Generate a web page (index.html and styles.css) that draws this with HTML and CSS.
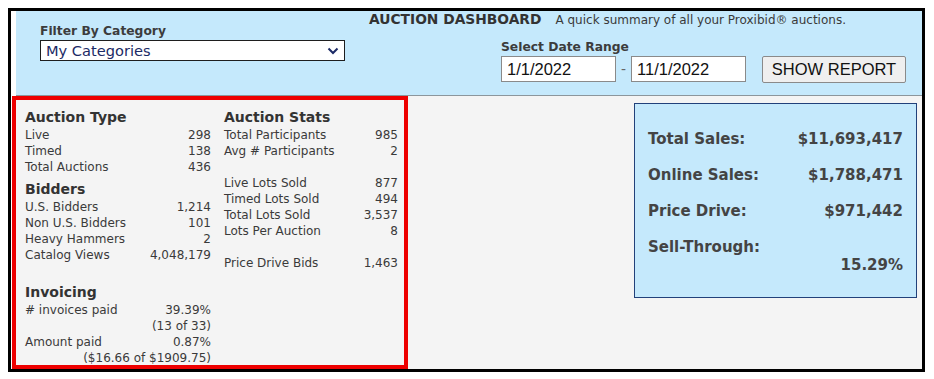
FILE: index.html
```html
<!DOCTYPE html>
<html lang="en">
<head>
<meta charset="utf-8">
<title>Auction Dashboard</title>
<link rel="stylesheet" href="styles.css">
</head>
<body>
<div class="frame">
  <header class="hdr">
    <div class="filter">
      <div class="lbl">Filter By Category</div>
      <div class="select">
        <span>My Categories</span>
        <svg class="chev" width="12" height="8" viewBox="0 0 12 8"><path d="M1.5 1.5 L6 6 L10.5 1.5" fill="none" stroke="#1b2a66" stroke-width="2"/></svg>
      </div>
    </div>
    <div class="hdr-right">
      <div class="title"><b>AUCTION DASHBOARD</b><span class="sub">A quick summary of all your Proxibid® auctions.</span></div>
      <div class="dates">
        <div class="lbl">Select Date Range</div>
        <div class="date-row">
          <div class="input">1/1/2022</div>
          <span class="dash">-</span>
          <div class="input">11/1/2022</div>
          <button class="btn">SHOW REPORT</button>
        </div>
      </div>
    </div>
  </header>
  <main class="content">
    <div class="stats">
      <div class="col col1">
        <div class="h">Auction Type</div>
        <div class="row"><span>Live</span><span>298</span></div>
        <div class="row"><span>Timed</span><span>138</span></div>
        <div class="row"><span>Total Auctions</span><span>436</span></div>
        <div class="h h-gap">Bidders</div>
        <div class="row"><span>U.S. Bidders</span><span>1,214</span></div>
        <div class="row"><span>Non U.S. Bidders</span><span>101</span></div>
        <div class="row"><span>Heavy Hammers</span><span>2</span></div>
        <div class="row"><span>Catalog Views</span><span>4,048,179</span></div>
        <div class="h h-gap2">Invoicing</div>
        <div class="row"><span># invoices paid</span><span>39.39%</span></div>
        <div class="row end"><span>(13 of 33)</span></div>
        <div class="row"><span>Amount paid</span><span>0.87%</span></div>
        <div class="row end"><span>($16.66 of $1909.75)</span></div>
      </div>
      <div class="col col2">
        <div class="h">Auction Stats</div>
        <div class="row"><span>Total Participants</span><span>985</span></div>
        <div class="row"><span>Avg # Participants</span><span>2</span></div>
        <div class="spacer"></div>
        <div class="row"><span>Live Lots Sold</span><span>877</span></div>
        <div class="row"><span>Timed Lots Sold</span><span>494</span></div>
        <div class="row"><span>Total Lots Sold</span><span>3,537</span></div>
        <div class="row"><span>Lots Per Auction</span><span>8</span></div>
        <div class="spacer"></div>
        <div class="row"><span>Price Drive Bids</span><span>1,463</span></div>
      </div>
    </div>
    <div class="sales">
      <div class="srow"><span>Total Sales:</span><span>$11,693,417</span></div>
      <div class="srow"><span>Online Sales:</span><span>$1,788,471</span></div>
      <div class="srow"><span>Price Drive:</span><span>$971,442</span></div>
      <div class="srow"><span>Sell-Through:</span></div>
      <div class="srow end"><span>15.29%</span></div>
    </div>
  </main>
  <div class="highlight"></div>
</div>
</body>
</html>
```

FILE: styles.css
```css
* { box-sizing: border-box; }

html, body { background: #ffffff; }

body {
  margin: 8px;
  font-family: "DejaVu Sans", Verdana, sans-serif;
  color: #3a3a3a;
}

.frame {
  position: relative;
  width: 917px;
  height: 364px;
  border: 3px solid #000000;
  background: #ffffff;
  display: flex;
  flex-direction: column;
}

/* ---------- header ---------- */
.hdr {
  display: flex;
  margin-left: 5px;
  height: 85px;
  background: #c5e9fc;
  border-bottom: 1px solid #8c969c;
}

.lbl {
  font-weight: bold;
  font-size: 12.3px;
  line-height: 15px;
  color: #3c3c3c;
}

.filter {
  margin-left: 24px;
  padding-top: 13px;
  width: 305px;
}

.select {
  margin-top: 1px;
  height: 21px;
  border: 1px solid #1e1e1e;
  background: #ffffff;
  display: flex;
  align-items: center;
  justify-content: space-between;
  padding: 0 5px 0 5px;
  color: #1b2a66;
  font-size: 14.6px;
  line-height: 19px;
}

.hdr-right {
  margin-left: 24px;
  display: flex;
  flex-direction: column;
}

.title {
  height: 16px;
  font-size: 13.8px;
  line-height: 16px;
  color: #333333;
  white-space: nowrap;
  display: flex;
  align-items: baseline;
}

.title b {
  font-size: 13.8px;
  font-weight: bold;
}

.sub {
  margin-left: 14px;
  font-size: 12px;
  color: #3a3a3a;
}

.dates {
  margin-left: 132px;
  margin-top: 13px;
}

.date-row {
  margin-top: 1px;
  display: flex;
  align-items: flex-start;
}

.input {
  height: 26px;
  width: 115px;
  border: 1px solid #8a8a8a;
  background: #ffffff;
  font-family: "Liberation Sans", Arial, sans-serif;
  font-size: 16.5px;
  line-height: 24px;
  padding-left: 5px;
  color: #111111;
}

.dash {
  width: 15px;
  text-align: center;
  font-family: "Liberation Sans", Arial, sans-serif;
  font-size: 15px;
  line-height: 26px;
  color: #666666;
}

.btn {
  margin-left: 16px;
  height: 27px;
  width: 144px;
  padding: 0;
  border: 1px solid #8a8a8a;
  border-radius: 2px;
  background: #efefef;
  font-family: "Liberation Sans", Arial, sans-serif;
  font-size: 16.5px;
  line-height: 25px;
  color: #111111;
}

/* ---------- content ---------- */
.content {
  flex: 1;
  display: flex;
  align-items: flex-start;
  justify-content: space-between;
  margin-left: 5px;
  background: #f4f4f4;
}

.stats {
  display: flex;
  padding: 13px 0 0 9px;
}

.col { font-size: 12px; line-height: 16px; }
.col1 { width: 186px; }
.col2 { width: 174px; margin-left: 13px; }

.h {
  font-size: 14px;
  font-weight: bold;
  line-height: 17px;
  margin-bottom: 1px;
  color: #333333;
}

.h-gap { margin-top: 6px; }
.h-gap2 { margin-top: 21px; }

.row {
  display: flex;
  justify-content: space-between;
  white-space: nowrap;
}

.row.end { justify-content: flex-end; }

.spacer { height: 16px; }

.sales {
  margin-top: 7px;
  margin-right: 5px;
  width: 283px;
  height: 195px;
  border: 1px solid #22417a;
  background: #c5e9fc;
  padding: 26px 13px 0 13px;
  display: flex;
  flex-direction: column;
  gap: 18px;
}

.srow {
  display: flex;
  justify-content: space-between;
  font-size: 15px;
  font-weight: bold;
  line-height: 18px;
  color: #444444;
  white-space: nowrap;
}

.srow.end { justify-content: flex-end; margin-top: -18px; }

/* annotation overlay */
.highlight {
  position: absolute;
  left: 1px;
  top: 85px;
  width: 396px;
  height: 273px;
  border: 4px solid #ee0000;
  pointer-events: none;
}
```
